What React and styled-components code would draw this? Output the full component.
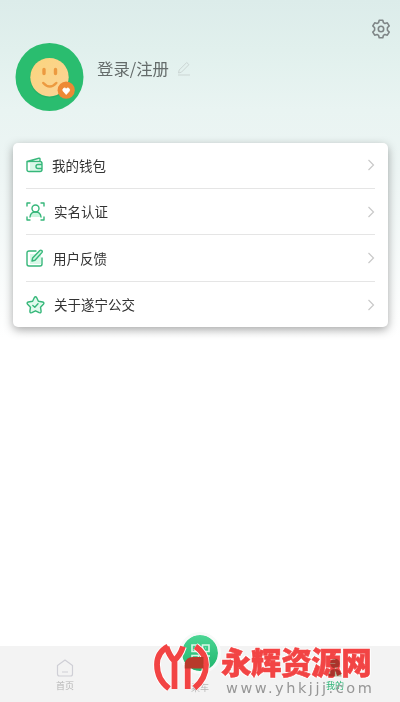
import React from 'react';
import styled, { createGlobalStyle } from 'styled-components';

const GlobalStyle = createGlobalStyle`
    * {
        box-sizing: border-box;
    }
    body {
        margin: 0;
        background: #fff;
        font-family: 'Noto Sans CJK SC', 'Noto Sans', sans-serif;
    }
`;

const Page = styled.div`
    position: relative;
    display: flex;
    flex-direction: column;
    width: 400px;
    height: 702px;
    overflow: hidden;
    background: linear-gradient(#dcecea 0, #e1f0ed 50px, #e9f4f2 110px, #edf5f4 170px, #fff 338px);
`;

const TopBar = styled.header`
    display: flex;
    justify-content: flex-end;
    height: 43px;
    padding: 19px 9px 0 0;
`;

const Profile = styled.section`
    display: flex;
    height: 99.5px;
    padding-left: 15px;
`;

const Login = styled.div`
    display: flex;
    align-items: center;
    height: 24px;
    margin: 13px 0 0 13px;
    gap: 8px;
    color: #646b6a;
    font-size: 16.4px;
    line-height: 24px;
    white-space: nowrap;
`;

const Card = styled.ul`
    flex: none;
    height: 184.8px;
    margin: 0 12.5px 0 13px;
    padding: 0 13px;
    list-style: none;
    border-radius: 5px;
    background: #fff;
    box-shadow: 0 3px 10px rgba(0, 0, 0, 0.34);
`;

const Row = styled.li`
    display: flex;
    align-items: center;
    height: ${({ $height }) => $height}px;
    border-bottom: ${({ $last }) => ($last ? 'none' : '1px solid #e5e5e5')};
    color: #333;
    font-size: 13.5px;
    white-space: nowrap;
`;

const RowLabel = styled.span`
    flex: 1;
    margin-left: 9px;
    padding-bottom: 1px;
    line-height: 20px;
`;

const TabBar = styled.nav`
    display: grid;
    grid-template-columns: 130px 140px 130px;
    height: 56px;
    margin-top: auto;
    background: #f3f3f3;
`;

const Tab = styled.div`
    display: flex;
    flex-direction: column;
    align-items: center;
    gap: ${({ $gap }) => $gap}px;
    padding-top: ${({ $top }) => $top}px;
    color: ${({ $active }) => ($active ? '#2fb577' : '#b5b5b5')};
    font-size: 9px;
    line-height: 12px;
`;

const ScanButton = styled.div`
    display: flex;
    align-items: center;
    justify-content: center;
    flex: none;
    width: 42px;
    height: 42px;
    margin-top: -14px;
    border: 3px solid #f8faf9;
    border-radius: 50%;
    background: linear-gradient(#4bd694, #1fb56c) padding-box;
`;

const Watermark = styled.div`
    position: absolute;
    left: 152px;
    top: 640px;
    z-index: 1;
    display: flex;
    align-items: flex-start;
`;

const SiteName = styled.div`
    color: #f24444;
    font-size: 30.4px;
    font-weight: 900;
    letter-spacing: -0.3px;
    line-height: 36px;
    white-space: nowrap;
    text-shadow: 1px 1px 1px #fff, -1px -1px 1px #fff, 1px -1px 1px #fff, -1px 1px 1px #fff;
    -webkit-text-stroke: 0.6px #f24444;
`;

const SiteText = styled.div`
    margin: 2.5px 0 0 11px;
`;

const SiteUrl = styled.div`
    margin: 1px 0 0 5px;
    color: #969696;
    font-family: 'DejaVu Sans', sans-serif;
    font-size: 14.5px;
    letter-spacing: 2.55px;
    line-height: 16px;
    white-space: nowrap;
`;

// Blends with the red lettering that lies under it.
const TintedIcon = styled.svg`
    position: relative;
    z-index: 2;
    mix-blend-mode: multiply;
`;

const green = {
    fill: 'none',
    stroke: '#36b77a',
    strokeWidth: 1.4,
    strokeLinecap: 'round',
    strokeLinejoin: 'round'
};

function GearIcon() {
    return (
        <svg width="20" height="20" viewBox="0 0 20 20" fill="none" stroke="#7e8586" strokeWidth="1.6" strokeLinejoin="round">
            <path d="M8.200 1.200h3.600l.6 2.400 1.500.9 2.400-.7 1.900 3.100-1.800 1.800v2.600l1.800 1.800-1.900 3.100-2.400-.7-1.500.9-.6 2.400H8.200l-.6-2.400-1.500-.9-2.400.7-1.900-3.100 1.800-1.800V8.700L1.800 6.900l1.900-3.100 2.400.7 1.500-.9z" />
            <circle cx="10" cy="10" r="2.7" />
        </svg>
    );
}

function Avatar() {
    return (
        <svg width="69" height="68" viewBox="0 0 69 68">
            <defs>
                <linearGradient id="face" x1="0" y1="0" x2="1" y2="1">
                    <stop offset="0" stopColor="#fbd57c" />
                    <stop offset="1" stopColor="#fbd398" />
                </linearGradient>
            </defs>
            <circle cx="34.5" cy="34" r="34" fill="#2abd6f" />
            <circle cx="34.5" cy="35" r="19.8" fill="#1fa75f" opacity=".5" />
            <circle cx="34.5" cy="34.2" r="19.2" fill="url(#face)" />
            <g fill="none" stroke="#ec9a40" strokeLinecap="round">
                <path d="M29 26.500v4M40.500 26.500v4" strokeWidth="3.4" />
                <path d="M28.300 40q6.500 7 13 0" strokeWidth="2.5" />
            </g>
            <circle cx="51.2" cy="47.2" r="8.6" fill="#ed8935" />
            <path d="M51.200 51.500l-3-3.300c-1.500-2.200 1.500-4.700 3-2.200 1.500-2.500 4.500 0 3 2.200z" fill="#fff" stroke="#fff" strokeWidth=".8" />
        </svg>
    );
}

function PencilIcon() {
    return (
        <svg width="14" height="15" viewBox="0 0 14 15" fill="none" stroke="#cbd5d3" strokeWidth="1">
            <path d="M1.500 12l.7-3 7.500-7.500 2.200 2.200-7.500 7.500zM1 14h12" />
        </svg>
    );
}

function WalletIcon() {
    return (
        <svg width="17" height="16" viewBox="0 0 17 16" { ...green }>
            <path d="M4 6h12v8H4z" fill="#d9f8e8" stroke="none" />
            <path d="M1 4.500L13 1.300q1-.2 1 .8v2M1 4.500h13q2 0 2 2v6q0 2-2 2H3q-2 0-2-2zM16 7.500h-4a2 2 0 000 4h4" />
        </svg>
    );
}

function IdentityIcon() {
    return (
        <svg width="19" height="19" viewBox="0 0 19 19" { ...green }>
            <path d="M4 15q1-4 5.500-4t5.500 4z" fill="#c9f5de" stroke="none" />
            <path d="M1 4V1h3M15 1h3v3M18 15v3h-3M4 18H1v-3" />
            <circle cx="9.5" cy="6.5" r="3.5" />
            <path d="M4 15q.5-5 5.500-5t5.500 5" />
        </svg>
    );
}

function FeedbackIcon() {
    return (
        <svg width="18" height="18" viewBox="0 0 18 18" { ...green }>
            <path d="M4 5h11v10H4z" fill="#d9f8e8" stroke="none" />
            <path d="M10 2H3Q1 2 1 4v11q0 2 2 2h11q2 0 2-2V9" />
            <path d="M6 12l.6-3 7.200-7.500q1-.8 2 .1.900.9.100 2L9 11.200z" fill="#c9f5de" />
        </svg>
    );
}

function StarIcon() {
    return (
        <svg width="19" height="18" viewBox="0 0 19 18" { ...green }>
            <path d="M8.300 1.700q1.200-1.800 2.400 0l1.700 3.600 4.300.7q2 .6.700 2.200l-2.900 3 .6 4q0 2.100-1.900 1.500l-3.700-1.900-3.700 1.900q-1.900.6-1.900-1.500l.6-4-2.900-3Q.300 6.600 2.300 6l4.300-.7z" fill="#e2faed" />
            <path d="M6.800 9.400l2 1.800 3.200-3.400" />
        </svg>
    );
}

function Chevron() {
    return (
        <svg width="8" height="12" viewBox="0 0 8 12" fill="none" stroke="#c9c9c9" strokeWidth="1.2">
            <path d="M1.500 1l5 5-5 5" />
        </svg>
    );
}

function HomeIcon() {
    return (
        <svg width="18" height="18" viewBox="0 0 18 18" fill="none" stroke="#cfcfd6" strokeWidth="1.2" strokeLinejoin="round">
            <path d="M1.500 6.500L9 1l7.500 5.500V15q0 2-2 2h-11q-2 0-2-2zM6 13h6" />
        </svg>
    );
}

function QrIcon() {
    return (
        <svg width="19" height="19" viewBox="0 0 19 19" fill="none" stroke="#d9f7e8" strokeWidth="1.6">
            <path d="M1 1h6.500v6.500H1zM11.500 1H18v6.500h-6.500zM1 11.500h6.500V18H1zM11 12h3v3h4M18 11v2M11 18h2M16 18h2M4 4h.6M14.500 4h.6M4 14.500h.6" />
        </svg>
    );
}

function UserIcon() {
    return (
        <TintedIcon width="16" height="19" viewBox="0 0 16 19" fill="#b3c0a0">
            <circle cx="8" cy="5.5" r="4.8" />
            <path d="M1.500 18.500q0-7.500 6.500-7.500t6.500 7.500z" />
        </TintedIcon>
    );
}

function SiteLogo() {
    return (
        <svg width="58" height="54" viewBox="152 640 58 54" fill="none" strokeLinejoin="round">
            {[['#fff', 7.6], ['#f24444', 5.8]].map(([color, width]) =>
                <g key={ color } stroke={ color } strokeWidth={ width }>
                    <path d="M168 646.500q-11 6-11 18 0 15 12 24" />
                    <path d="M166.500 647q3 9 7.500 13.500Q180 656 183 646.500M174.500 659v30" />
                    <path d="M187.700 689v-24" />
                    <path d="M195.500 646.500q10.500 7 10.500 18 0 14-11.500 23.500" />
                </g>
            )}
            <path d="M184.800 668.500v-5q1-6.500 8-6.500h10.700v11.500z" fill="#b83a2b" />
        </svg>
    );
}

const menu = [
    { label: '我的钱包', icon: <WalletIcon />, height: 46.5 },
    { label: '实名认证', icon: <IdentityIcon />, height: 46 },
    { label: '用户反馈', icon: <FeedbackIcon />, height: 47 },
    { label: '关于遂宁公交', icon: <StarIcon />, height: 45 }
];

export function App() {
    return (
        <Page>
            <GlobalStyle />
            <TopBar>
                <GearIcon />
            </TopBar>
            <Profile>
                <Avatar />
                <Login>
                    登录/注册
                    <PencilIcon />
                </Login>
            </Profile>
            <Card>
                {menu.map((item, index) =>
                    <Row key={ item.label } $height={ item.height } $last={ index === menu.length - 1 }>
                        { item.icon }
                        <RowLabel>{ item.label }</RowLabel>
                        <Chevron />
                    </Row>
                )}
            </Card>
            <TabBar>
                <Tab $top={ 13 } $gap={ 3 }>
                    <HomeIcon />
                    <span>首页</span>
                </Tab>
                <Tab $top={ 0 } $gap={ 8 }>
                    <ScanButton>
                        <QrIcon />
                    </ScanButton>
                    <span>乘车</span>
                </Tab>
                <Tab $top={ 12 } $gap={ 3 } $active>
                    <UserIcon />
                    <span>我的</span>
                </Tab>
            </TabBar>
            <Watermark>
                <SiteLogo />
                <SiteText>
                    <SiteName>永辉资源网</SiteName>
                    <SiteUrl>www.yhkjjj.com</SiteUrl>
                </SiteText>
            </Watermark>
        </Page>
    );
}

export default App;
